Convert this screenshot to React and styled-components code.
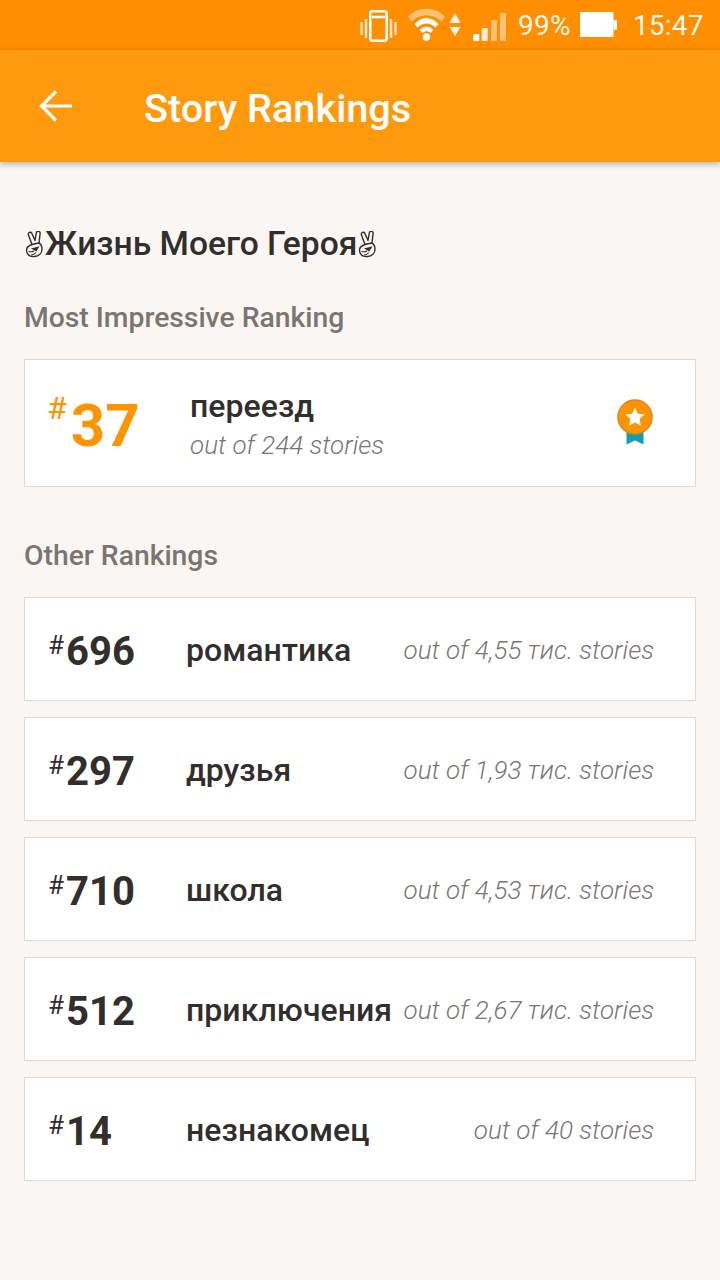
import React from 'react';
import styled, { createGlobalStyle } from 'styled-components';

const GlobalStyle = createGlobalStyle`
  html, body {
    margin: 0;
    padding: 0;
    background: #f9f6f3;
    font-family: Roboto, "Liberation Sans", sans-serif;
  }
`;

const Page = styled.div`
  width: 720px;
  height: 1280px;
  overflow: hidden;
  background: #f9f6f3;
  color: #322e2c;
`;

const StatusBar = styled.div`
  height: 50px;
  box-sizing: border-box;
  padding-left: 360px;
  background: #ff8f00;
  color: rgba(255, 255, 255, 0.94);
  display: flex;
  align-items: center;
  font-size: 28px;
`;

const StatusSlot = styled.span`
  display: flex;
  flex: none;
  margin-left: ${p => p.$left || 0}px;
`;

const Percent = styled.span`
  margin-left: 11px;
  letter-spacing: 0.3px;
`;

const Clock = styled.span`
  margin-left: 16px;
  letter-spacing: 0.2px;
`;

const AppBar = styled.header`
  height: 112px;
  box-sizing: border-box;
  padding: 5px 0 0 38px;
  background: #ff9a0e;
  color: #fff;
  display: flex;
  align-items: center;
  box-shadow: 0 2px 6px rgba(0, 0, 0, 0.3);
  position: relative;
`;

const BackSlot = styled.span`
  display: flex;
  margin-top: -5px;
`;

const Title = styled.h1`
  margin: 0 0 0 70px;
  font-size: 39.700px;
  font-weight: 500;
  line-height: 46px;
  white-space: nowrap;
`;

const Content = styled.main`
  padding: 60px 24px 0;
`;

const StoryName = styled.h2`
  margin: 0;
  font-size: 33.600px;
  line-height: 44px;
  font-weight: 500;
  white-space: nowrap;
  display: flex;
  align-items: center;
`;

const SectionLabel = styled.h3`
  margin: ${p => p.$top}px 0 23px;
  font-size: 28.300px;
  line-height: 36px;
  font-weight: 500;
  color: #7b7572;
`;

const Card = styled.div`
  box-sizing: border-box;
  background: #fff;
  border: 1px solid #dedbd8;
  display: flex;
  align-items: center;
  padding: 3px 41px 0 23px;
`;

const TopCard = styled(Card)`
  height: 128px;
  padding-top: 5px;
`;

const RankCard = styled(Card)`
  height: 104px;
  margin-bottom: 16px;
`;

const Rank = styled.div`
  display: flex;
  align-items: flex-start;
  flex: none;
  width: ${p => p.$width}px;
  margin-top: ${p => p.$top || 0}px;
  color: ${p => p.$color};
`;

const Hash = styled.span`
  font-size: ${p => p.$size}px;
  line-height: 1;
  font-weight: 400;
  margin: ${p => p.$lift}px ${p => p.$gap}px 0 ${p => p.$shift}px;
`;

const RankNumber = styled.span`
  font-size: ${p => p.$size}px;
  line-height: 1;
  font-weight: 700;
`;

const TopText = styled.div`
  flex: 1;
  display: flex;
  flex-direction: column;
`;

const Tag = styled.div`
  font-size: 32px;
  line-height: 39px;
  font-weight: 500;
  letter-spacing: 0.05px;
`;

const OutOf = styled.div`
  font-size: 26px;
  line-height: 38px;
  font-weight: 300;
  font-style: italic;
  color: #7a7573;
  white-space: nowrap;
`;

const RowOutOf = styled(OutOf)`
  margin-bottom: 1px;
`;

const RowTag = styled(Tag)`
  flex: 1;
  white-space: nowrap;
`;

const MedalSlot = styled.span`
  display: flex;
  margin-top: -8px;
`;

const Medal = () => (
  <svg width="38" height="48" viewBox="0 0 38 48">
    <path d="M10.500 30h17v16.500l-8.500-4-8.500 4z" fill="#0f9fb3" />
    <circle cx="19" cy="19" r="17" fill="#ff9300" stroke="#d98a1c" strokeWidth="1.5" />
    <path d="M19 9.500l2.900 6.200 6.700.8-5 4.600 1.400 6.700-6-3.400-6 3.400 1.400-6.700-5-4.600 6.700-.8z" fill="#fff" />
  </svg>
);

const BackArrow = () => (
  <svg width="36" height="36" viewBox="0 0 36 36" fill="none" stroke="#fff" strokeWidth="3.2">
    <path d="M34 18H4M18 3.500 3.500 18 18 32.500" />
  </svg>
);

const VictoryHand = () => (
  <svg width="21" height="27" viewBox="0 0 21 27" fill="none" stroke="#322e2c" strokeWidth="1.400" strokeLinejoin="round">
    <path d="M8 13.500 4.300 3.500a1.900 1.900 0 0 1 3.500-1.300L11 9.500 12.300 2a1.900 1.900 0 0 1 3.800.6L15 12" />
    <path d="M6 14.500c-2.500 1-3.800 3.700-3.300 6.300.6 3.200 4 5.200 7.800 4.700 4.300-.5 7.500-3.200 7.500-7.200 0-3-1.200-5.300-3.300-6.300L8 13.500z" />
    <path d="M7 17.500l8.500-2.300-3.200 5.300z" fill="#322e2c" stroke="none" />
    <path d="M4.500 20.500c2 .4 4 .2 5.500-.6M7 24c2 0 3.500-.8 5-2.500" strokeWidth="1.100" />
  </svg>
);

const VibrateIcon = () => (
  <svg width="37" height="36" viewBox="0 0 37 36" fill="none" stroke="#fff">
    <rect x="10.250" y="4.250" width="16.500" height="29.500" rx="2.500" strokeWidth="2.500" />
    <path d="M12 10h13" strokeWidth="2.500" />
    <path d="M6 12v19M31 12v19M1.500 15v13M35.500 15v13" strokeWidth="2.500" opacity="0.75" />
  </svg>
);

const WifiIcon = () => (
  <svg width="54" height="36" viewBox="0 0 54 36">
    <path d="M1 10C10-1 29-1 38 10l-3.500 4.500C26 6 13 6 4.500 14.500z" fill="#fff" opacity="0.45" />
    <path d="M7.500 17c7-8 17-8 24 0l-3 3.500c-5.500-5.500-12.500-5.500-18 0z" fill="#fff" />
    <path d="M12.500 23c4-4.500 10-4.500 14 0l-3 3c-2.500-2.500-5.500-2.500-8 0z" fill="#fff" />
    <circle cx="19.500" cy="30" r="3.800" fill="#fff" />
    <path d="M48 6l5.500 10h-11zM42.500 20h11L48 29z" fill="#fff" opacity="0.9" />
  </svg>
);

const SignalIcon = () => (
  <svg width="34" height="36" viewBox="0 0 34 36" fill="#fff">
    <rect x="0.300" y="27" width="6" height="7" rx="1" />
    <rect x="8.700" y="21" width="6" height="13" rx="1" opacity="0.85" />
    <rect x="18" y="13" width="6" height="21" rx="1" opacity="0.45" />
    <rect x="27" y="6" width="6" height="28" rx="1" opacity="0.45" />
  </svg>
);

const BatteryIcon = () => (
  <svg width="37" height="26" viewBox="0 0 37 26" fill="#fff">
    <rect x="0" y="0" width="33.500" height="25" />
    <rect x="33.500" y="8" width="3.500" height="10" />
  </svg>
);

const rows = [
  { rank: '696', tag: 'романтика', total: 'out of 4,55 тис. stories' },
  { rank: '297', tag: 'друзья', total: 'out of 1,93 тис. stories' },
  { rank: '710', tag: 'школа', total: 'out of 4,53 тис. stories' },
  { rank: '512', tag: 'приключения', total: 'out of 2,67 тис. stories' },
  { rank: '14', tag: 'незнакомец', total: 'out of 40 stories' },
];

const App = () => (
  <Page>
    <GlobalStyle />
    <StatusBar>
      <StatusSlot><VibrateIcon /></StatusSlot>
      <StatusSlot $left={10}><WifiIcon /></StatusSlot>
      <StatusSlot $left={12}><SignalIcon /></StatusSlot>
      <Percent>99%</Percent>
      <StatusSlot $left={9}><BatteryIcon /></StatusSlot>
      <Clock>15:47</Clock>
    </StatusBar>
    <AppBar>
      <BackSlot><BackArrow /></BackSlot>
      <Title>Story Rankings</Title>
    </AppBar>
    <Content>
      <StoryName>
        <VictoryHand />Жизнь Моего Героя<VictoryHand />
      </StoryName>
      <SectionLabel $top={34}>Most Impressive Ranking</SectionLabel>
      <TopCard>
        <Rank $width={142} $color="#ff9300">
          <Hash $size={32} $gap={4} $lift={-4} $shift={-1}>#</Hash>
          <RankNumber $size={60}>37</RankNumber>
        </Rank>
        <TopText>
          <Tag>переезд</Tag>
          <OutOf>out of 244 stories</OutOf>
        </TopText>
        <MedalSlot><Medal /></MedalSlot>
      </TopCard>
      <SectionLabel $top={51}>Other Rankings</SectionLabel>
      {rows.map(row => (
        <RankCard key={row.rank}>
          <Rank $width={138} $color="#322e2c" $top={2}>
            <Hash $size={26} $gap={2} $lift={0} $shift={0}>#</Hash>
            <RankNumber $size={40}>{row.rank}</RankNumber>
          </Rank>
          <RowTag>{row.tag}</RowTag>
          <RowOutOf>{row.total}</RowOutOf>
        </RankCard>
      ))}
    </Content>
  </Page>
);

export default App;
